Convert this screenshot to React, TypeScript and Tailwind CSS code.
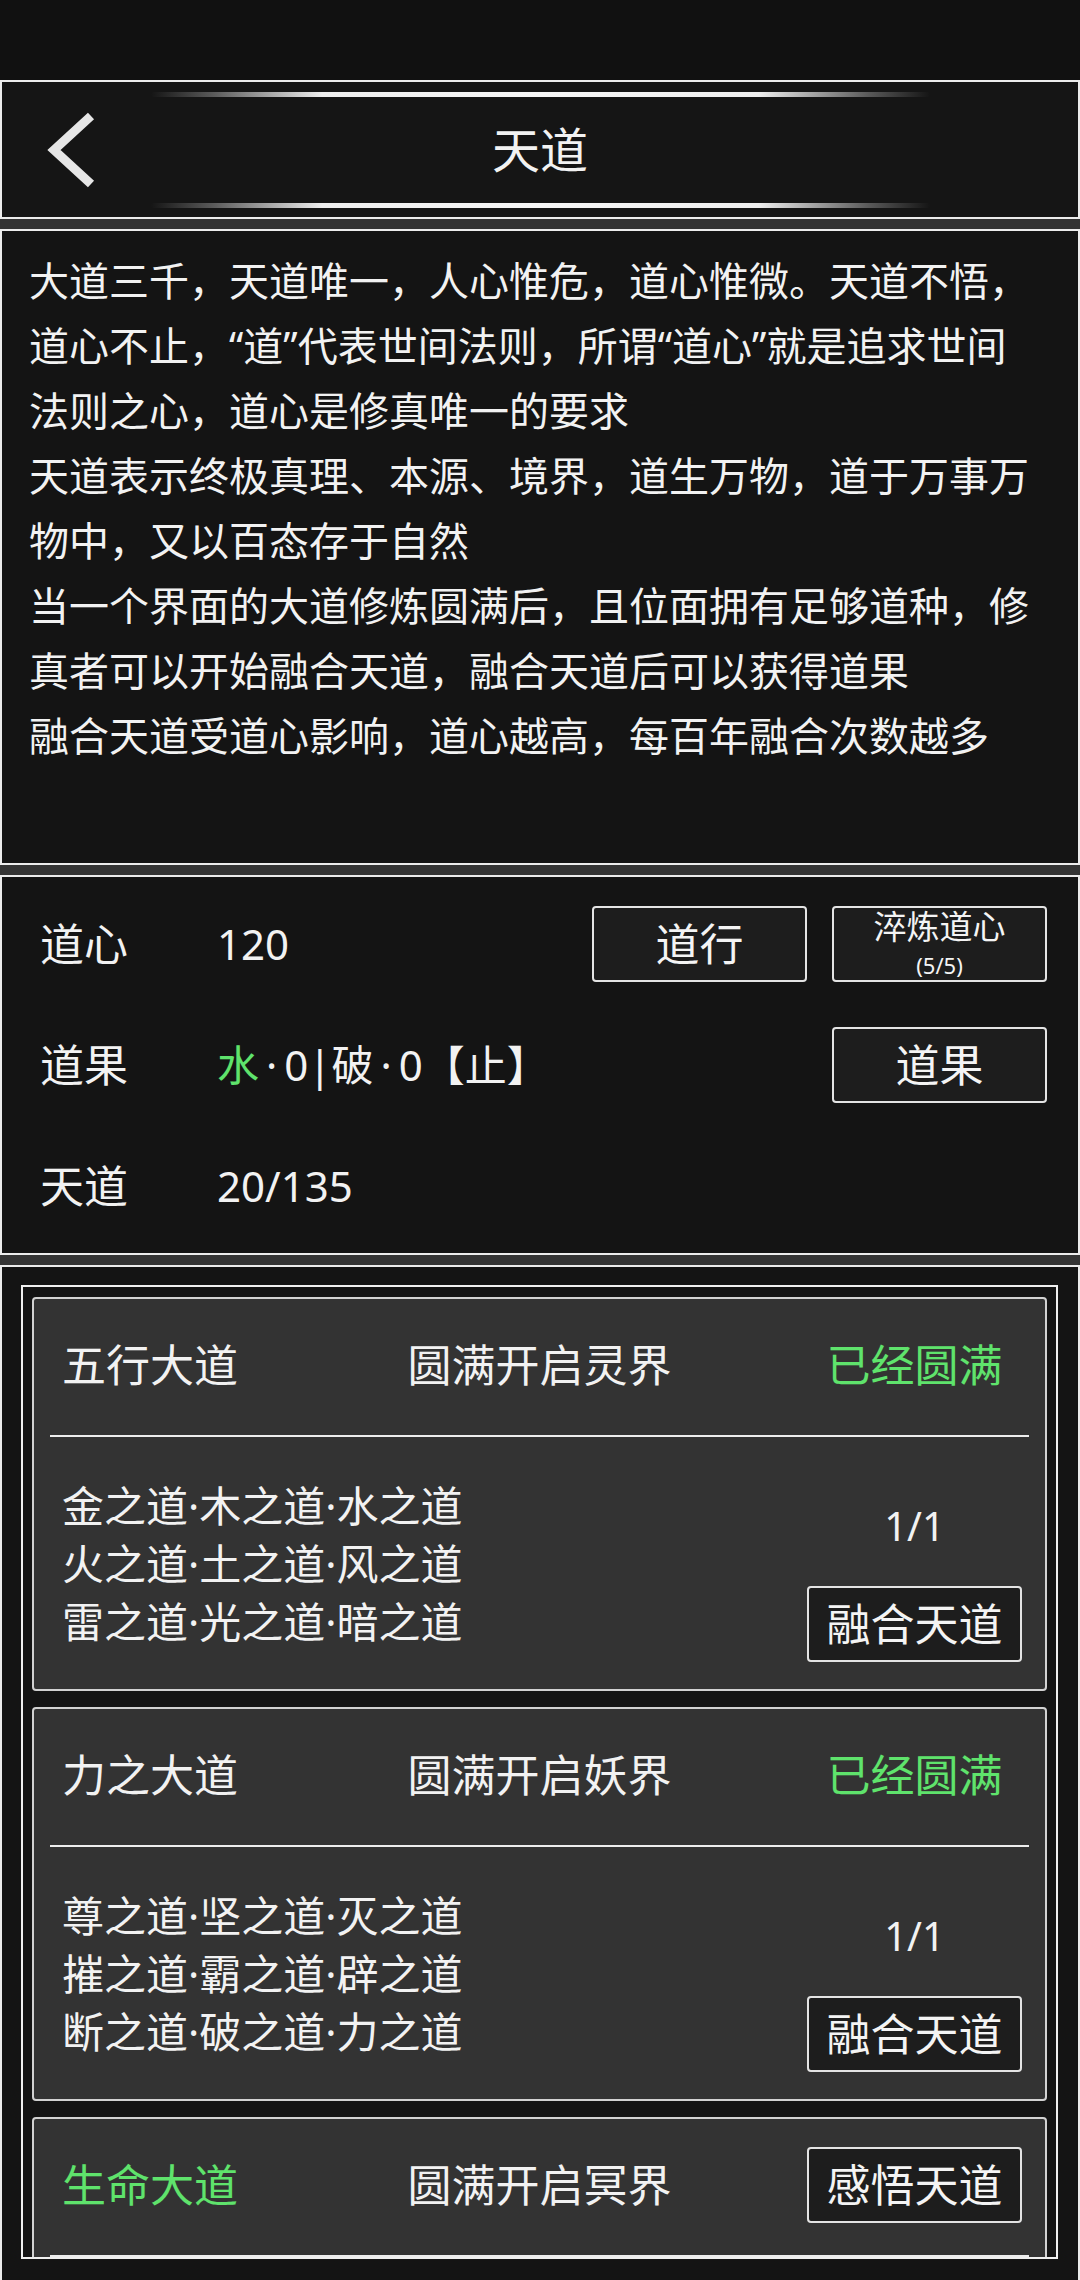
const GREEN = 'text-[#5fe36c]';

const descLines = [
  '大道三千，天道唯一，人心惟危，道心惟微。天道不悟，',
  '道心不止，“道”代表世间法则，所谓“道心”就是追求世间',
  '法则之心，道心是修真唯一的要求',
  '天道表示终极真理、本源、境界，道生万物，道于万事万',
  '物中，又以百态存于自然',
  '当一个界面的大道修炼圆满后，且位面拥有足够道种，修',
  '真者可以开始融合天道，融合天道后可以获得道果',
  '融合天道受道心影响，道心越高，每百年融合次数越多',
];

interface DaoCardProps {
  title: string;
  titleGreen?: boolean;
  realm: string;
  done: boolean;
  items: string[][];
  progress: string;
}

const cards: DaoCardProps[] = [
  {
    title: '五行大道',
    realm: '圆满开启灵界',
    done: true,
    items: [
      ['金之道', '木之道', '水之道'],
      ['火之道', '土之道', '风之道'],
      ['雷之道', '光之道', '暗之道'],
    ],
    progress: '1/1',
  },
  {
    title: '力之大道',
    realm: '圆满开启妖界',
    done: true,
    items: [
      ['尊之道', '坚之道', '灭之道'],
      ['摧之道', '霸之道', '辟之道'],
      ['断之道', '破之道', '力之道'],
    ],
    progress: '1/1',
  },
  {
    title: '生命大道',
    titleGreen: true,
    realm: '圆满开启冥界',
    done: false,
    items: [],
    progress: '',
  },
];

function DarkButton({ children, className }: { children: React.ReactNode; className?: string }) {
  return (
    <button
      className={
        'flex h-[76px] w-[215px] flex-col items-center justify-center rounded-[4px] border-2 border-[#e4e4e4] bg-[#1d1d1d] text-[#f4f4f4] ' +
        (className ?? '')
      }
    >
      {children}
    </button>
  );
}

function DaoCard({ title, titleGreen, realm, done, items, progress }: DaoCardProps) {
  return (
    <div className="h-[394px] shrink-0 rounded-[4px] border-2 border-[#d2d2d2] bg-[#333333]">
      {/* Header */}
      <div className="grid h-[136px] grid-cols-[1fr_auto_1fr] items-center pb-[4px]">
        <div className={'pl-[28px] text-[44px] leading-none ' + (titleGreen ? GREEN : 'text-[#f2f2f2]')}>
          {title}
        </div>
        <div className="text-[44px] leading-none">{realm}</div>
        <div className="flex justify-end pr-[23px]">
          {done ? (
            <div className={'flex w-[215px] justify-center text-[44px] leading-none ' + GREEN}>已经圆满</div>
          ) : (
            <DarkButton className="text-[44px] leading-none">感悟天道</DarkButton>
          )}
        </div>
      </div>
      <div className="mx-[16px] h-[2px] bg-[#ededed]" />

      {/* Body */}
      <div className="flex justify-between pl-[28px] pr-[23px]">
        <div className="pt-[40px] text-[42px] leading-[58px]">
          {items.map((row, i) => (
            <div key={i} className="whitespace-nowrap">
              {row.join('·')}
            </div>
          ))}
        </div>
        {progress && (
          <div className="flex w-[215px] flex-col items-center pt-[60px]">
            <div className="text-[40px] leading-[58px]">{progress}</div>
            <DarkButton className="mt-[31px] text-[44px] leading-none">融合天道</DarkButton>
          </div>
        )}
      </div>
    </div>
  );
}

function GlowLine() {
  return (
    <div className="mx-auto h-[5px] w-[779px] rounded-full bg-[linear-gradient(90deg,rgba(255,255,255,0)_0%,#5a5a5a_8%,#eeeeee_22%,#f6f6f6_50%,#eeeeee_78%,#5a5a5a_92%,rgba(255,255,255,0)_100%)]" />
  );
}

function StatRow({ label, children, right }: { label: string; children?: React.ReactNode; right?: React.ReactNode }) {
  return (
    <div className="flex h-[121px] items-center pl-[38px] pr-[31px]">
      <div className="w-[177px] text-[44px] leading-none">{label}</div>
      <div className="flex-1 whitespace-nowrap text-[42px] leading-none">{children}</div>
      <div className="flex gap-[25px]">{right}</div>
    </div>
  );
}

export default function App() {
  return (
    <div className="w-[1080px] bg-[#111111] font-['Noto_Sans','Noto_Sans_CJK_SC',sans-serif] text-[#f2f2f2]">
      {/* Status bar area */}
      <div className="h-[80px] bg-[#111111]" />

      {/* Title bar */}
      <div className="flex h-[139px] flex-col border-2 border-[#ececec] bg-[#151515] pt-[10px] pb-[9px]">
        <GlowLine />
        <div className="grid flex-1 grid-cols-[1fr_auto_1fr] items-center">
          <div className="pl-[38px]">
            <svg width="60" height="80" viewBox="0 0 60 80" fill="none">
              <polyline
                points="51,6 14,40 51,74"
                stroke="#e6e6e6"
                strokeWidth="9"
                strokeLinecap="butt"
                strokeLinejoin="miter"
              />
            </svg>
          </div>
          <div className="text-[48px] leading-none">天道</div>
          <div />
        </div>
        <GlowLine />
      </div>

      <div className="h-[10px] bg-[#343434]" />

      {/* Description */}
      <div className="h-[636px] border-2 border-[#ececec] bg-[#141414] pl-[27px] pt-[17px] text-[40px] leading-[65px]">
        {descLines.map((line, i) => (
          <div key={i} className="whitespace-nowrap">
            {line}
          </div>
        ))}
      </div>

      <div className="h-[10px] bg-[#343434]" />

      {/* Stats */}
      <div className="h-[380px] border-2 border-[#ececec] bg-[#141414] pt-[6px]">
        <StatRow
          label="道心"
          right={
            <>
              <DarkButton className="text-[44px] leading-none">道行</DarkButton>
              <DarkButton>
                <span className="block text-[33px] leading-[32px]">淬炼道心</span>
                <span className="mt-[11px] block text-[22px] leading-[22px]">(5/5)</span>
              </DarkButton>
            </>
          }
        >
          120
        </StatRow>
        <StatRow label="道果" right={<DarkButton className="text-[44px] leading-none">道果</DarkButton>}>
          <span className={GREEN}>水</span>
          <span className="mx-[7px]">·</span>0|破<span className="mx-[7px]">·</span>0【止】
        </StatRow>
        <StatRow label="天道">20/135</StatRow>
      </div>

      <div className="h-[10px] bg-[#343434]" />

      {/* Dao list */}
      <div className="h-[1015px] border-x-2 border-t-2 border-[#ececec] bg-[#141414] pl-[19px] pr-[20px] pt-[18px]">
        <div className="flex h-[974px] flex-col gap-[16px] overflow-hidden border-2 border-[#f0f0f0] px-[9px] pt-[10px]">
          {cards.map((c) => (
            <DaoCard key={c.title} {...c} />
          ))}
        </div>
      </div>
    </div>
  );
}
